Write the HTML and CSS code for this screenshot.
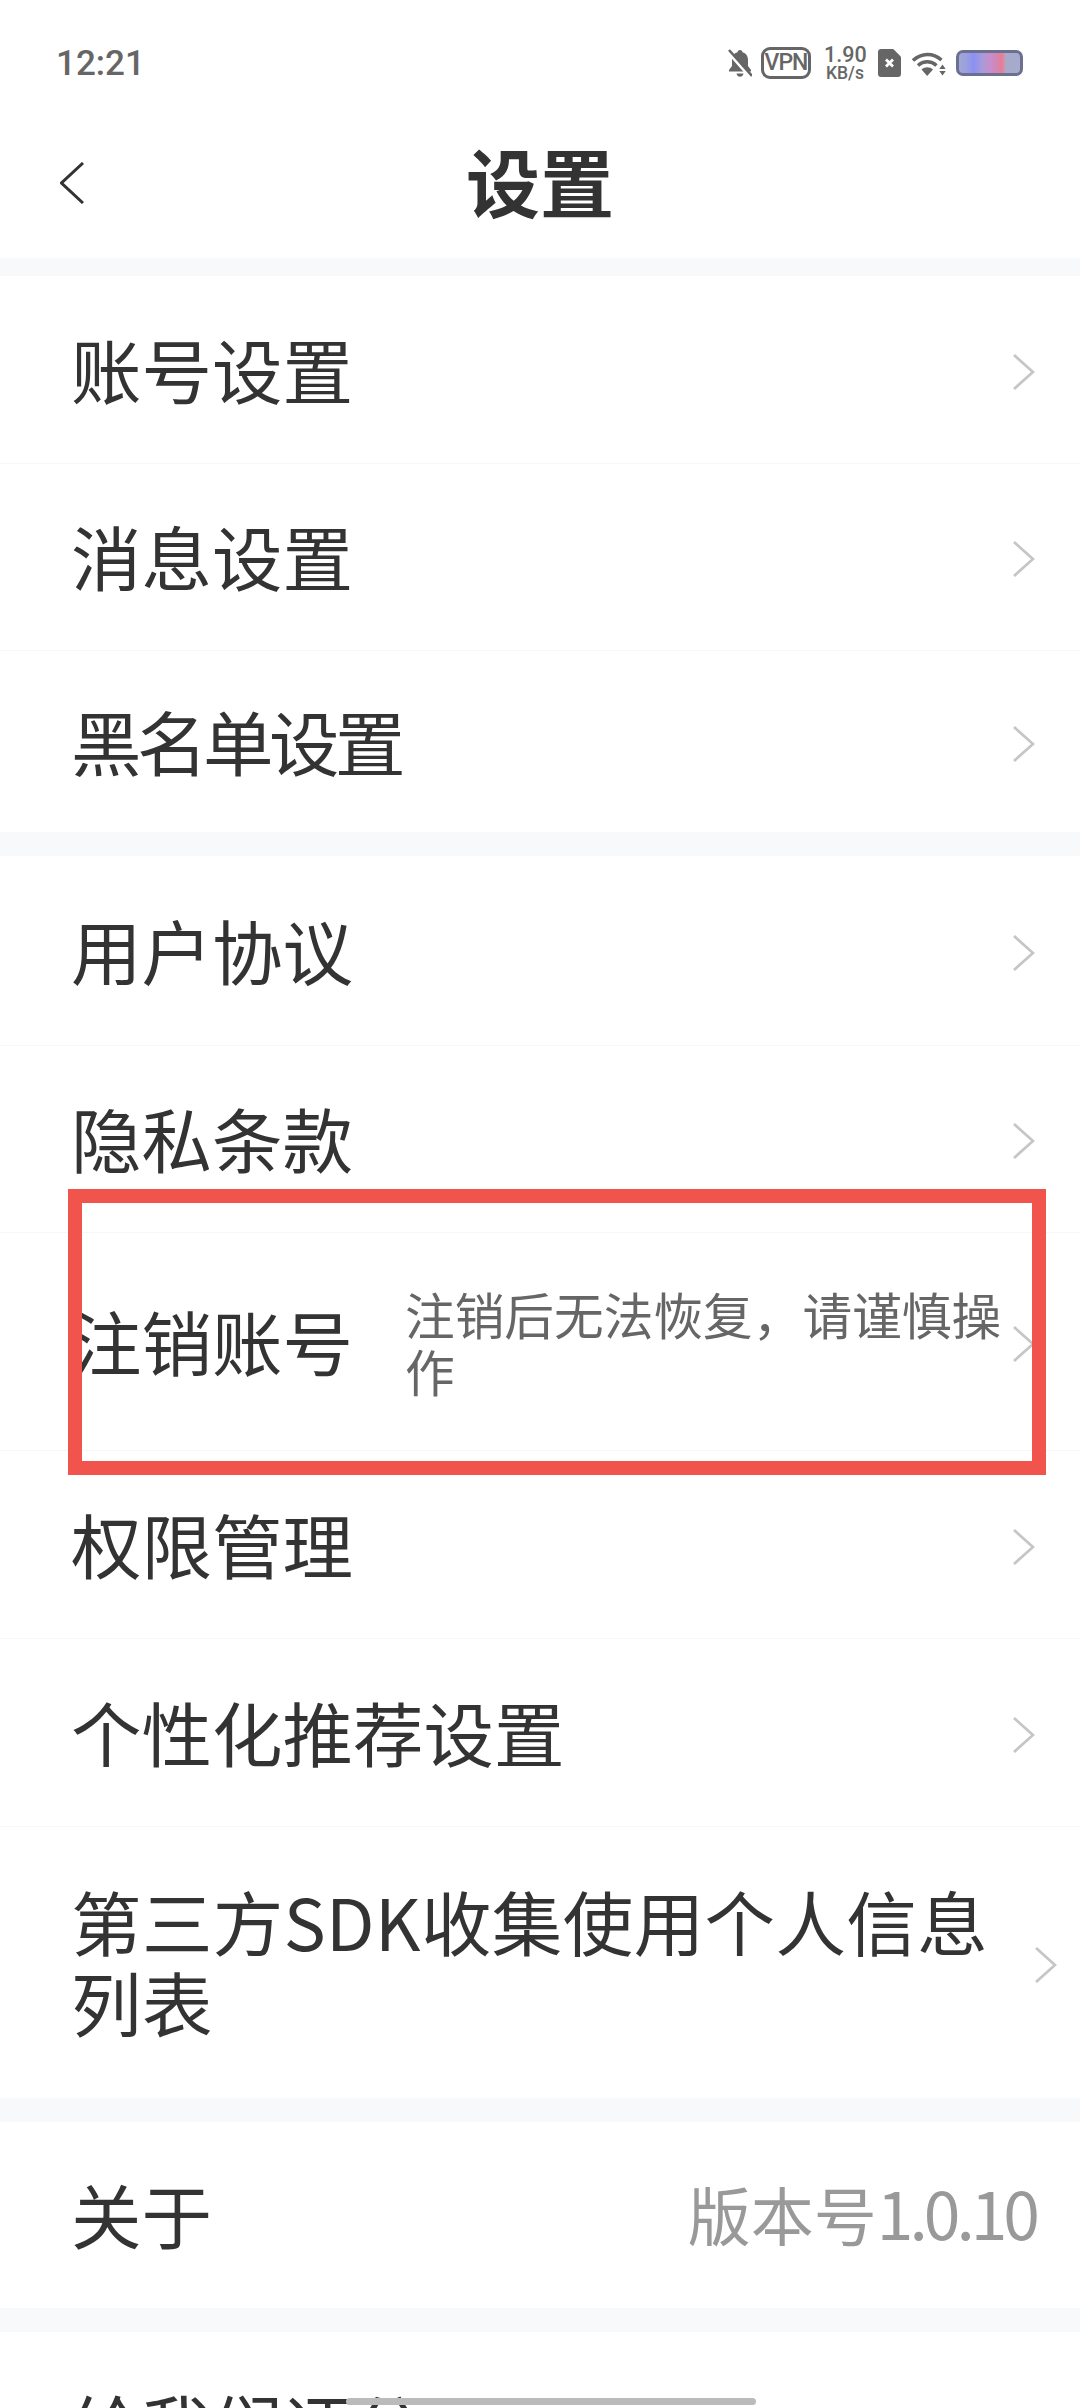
FILE: index.html
```html
<!DOCTYPE html>
<html>
<head>
<meta charset="utf-8">
<title>设置</title>
<link rel="stylesheet" href="styles.css">
</head>
<body>

<!-- Status bar -->
<div class="status">
  <div class="time">12:21</div>
  <div class="status-icons">
    <svg class="ic-bell" viewBox="0 0 24 28">
      <path d="M12 1c1.500 0 2.400 1 2.500 2.200 3.700 1 5.500 4 5.500 7.800v6l3 4v1.500H1V21l3-4v-6c0-3.800 1.800-6.800 5.500-7.800C9.600 2 10.500 1 12 1z" fill="#666"/>
      <path d="M8.500 24.500h7c-.3 2-1.700 3.300-3.500 3.300s-3.200-1.300-3.500-3.300z" fill="#666"/>
      <path d="M0 3L22 28" stroke="#fff" stroke-width="3"/>
      <path d="M1 1L24 27" stroke="#666" stroke-width="2.600"/>
    </svg>
    <div class="vpn">VPN</div>
    <div class="speed">
      <div class="speed-num">1.90</div>
      <div class="speed-unit">KB/s</div>
    </div>
    <svg class="ic-sim" viewBox="0 0 23 28">
      <path d="M3 0h11c1 0 1.600.3 2.300 1l5.700 5.700c.7.700 1 1.300 1 2.300v16c0 1.700-1.300 3-3 3H3c-1.700 0-3-1.300-3-3V3c0-1.700 1.300-3 3-3z" fill="#666"/>
      <path d="M8 10.500l7 7M15 10.500l-7 7" stroke="#fff" stroke-width="2.800"/>
    </svg>
    <svg class="ic-wifi" viewBox="0 0 34 26">
      <path d="M1 10.500C9.500 2.500 21 2.500 29.500 10" fill="none" stroke="#666" stroke-width="3.400"/>
      <path d="M6 15.500C11.500 10.500 19 10.500 24.500 15.500" fill="none" stroke="#666" stroke-width="3.400"/>
      <path d="M9.500 19.500C13 16.500 17.500 16.500 21 19.500L15.200 26z" fill="#666"/>
      <path d="M30.500 14.500l3.200 4.500h-6.400zM27.300 21h6.400l-3.200 4.500z" fill="#666"/>
    </svg>
    <div class="battery"></div>
  </div>
</div>

<!-- Title bar -->
<div class="nav">
  <svg class="back" viewBox="0 0 24 42">
    <path d="M23 1L1.500 21 23 41" fill="none" stroke="#333" stroke-width="3"/>
  </svg>
  <div class="nav-title">设置</div>
</div>

<div class="gap gap-first"></div>

<div class="row row-first">
  <div class="label">账号设置</div>
  <svg class="arrow" viewBox="0 0 22 36"><path d="M1 1l19 17L1 35" fill="none" stroke="#c6c6c6" stroke-width="2.800"/></svg>
</div>
<div class="row">
  <div class="label">消息设置</div>
  <svg class="arrow" viewBox="0 0 22 36"><path d="M1 1l19 17L1 35" fill="none" stroke="#c6c6c6" stroke-width="2.800"/></svg>
</div>
<div class="row row-last row-short">
  <div class="label label-tight">黑名单设置</div>
  <svg class="arrow" viewBox="0 0 22 36"><path d="M1 1l19 17L1 35" fill="none" stroke="#c6c6c6" stroke-width="2.800"/></svg>
</div>

<div class="gap"></div>

<div class="row row-tall">
  <div class="label">用户协议</div>
  <svg class="arrow" viewBox="0 0 22 36"><path d="M1 1l19 17L1 35" fill="none" stroke="#c6c6c6" stroke-width="2.800"/></svg>
</div>
<div class="row">
  <div class="label">隐私条款</div>
  <svg class="arrow" viewBox="0 0 22 36"><path d="M1 1l19 17L1 35" fill="none" stroke="#c6c6c6" stroke-width="2.800"/></svg>
</div>
<div class="row row-cancel">
  <div class="label">注销账号</div>
  <div class="sub">注销后无法恢复，请谨慎操作</div>
  <svg class="arrow" viewBox="0 0 22 36"><path d="M1 1l19 17L1 35" fill="none" stroke="#c6c6c6" stroke-width="2.800"/></svg>
  <!-- red box drawn on top of the row -->
  <div class="mark"></div>
</div>
<div class="row row-first">
  <div class="label">权限管理</div>
  <svg class="arrow" viewBox="0 0 22 36"><path d="M1 1l19 17L1 35" fill="none" stroke="#c6c6c6" stroke-width="2.800"/></svg>
</div>
<div class="row row-first">
  <div class="label">个性化推荐设置</div>
  <svg class="arrow" viewBox="0 0 22 36"><path d="M1 1l19 17L1 35" fill="none" stroke="#c6c6c6" stroke-width="2.800"/></svg>
</div>
<div class="row row-last row-sdk">
  <div class="label label-wrap">第三方SDK收集使用个人信息列表</div>
  <svg class="arrow" viewBox="0 0 22 36"><path d="M1 1l19 17L1 35" fill="none" stroke="#c6c6c6" stroke-width="2.800"/></svg>
</div>

<div class="gap"></div>

<div class="row row-last row-about">
  <div class="label">关于</div>
  <div class="version">版本号<span class="version-num">1.0.10</span></div>
</div>

<div class="gap"></div>

<div class="row row-last">
  <div class="label">给我们评分</div>
</div>

<div class="home-bar"></div>

</body>
</html>
```

FILE: styles.css
```css
body {
  margin: 0;
  width: 1080px;
  height: 2408px;
  overflow: hidden;
  position: relative;
  background-color: #fff;
  color: #333;
  font-family: "Noto Sans CJK SC", "Noto Sans", sans-serif;
}

/* Status bar */
.status {
  height: 126px;
  box-sizing: border-box;
  padding: 0 57px 0 56px;
  display: flex;
  justify-content: space-between;
  align-items: center;
}

.time {
  font-family: Roboto, sans-serif;
  font-size: 35px;
  font-weight: 500;
  color: #666;
}

.status-icons {
  display: flex;
  align-items: center;
}

.ic-bell {
  width: 24px;
  height: 28px;
}

.vpn {
  width: 50px;
  height: 32px;
  box-sizing: border-box;
  margin-left: 9px;
  border: 3px solid #666;
  border-radius: 9px;
  color: #666;
  font-family: Roboto, sans-serif;
  font-size: 23px;
  font-weight: 500;
  letter-spacing: -1px;
  line-height: 26px;
  text-align: center;
}

.speed {
  width: 42px;
  margin-left: 13px;
  color: #666;
  font-family: Roboto, sans-serif;
  font-weight: 500;
  text-align: center;
}

.speed-num {
  font-size: 21.5px;
  line-height: 21px;
}

.speed-unit {
  font-size: 17.5px;
  line-height: 17px;
}

.ic-sim {
  width: 23px;
  height: 28px;
  margin-left: 12px;
}

.ic-wifi {
  width: 34px;
  height: 26px;
  margin-left: 11px;
}

.battery {
  width: 67px;
  height: 26px;
  box-sizing: border-box;
  margin-left: 10px;
  border: 3px solid #6c7090;
  border-radius: 7px;
  background: linear-gradient(90deg, #a2a8d2 0%, #9a9fe0 12%, #8d90f2 24%, #a79bd8 38%, #c88ccc 52%, #e07f9c 70%, #e58a9c 74%, #a6aacb 76%, #a6aacb 100%);
}

/* Title bar */
.nav {
  height: 132px;
  box-sizing: border-box;
  padding: 0 0 18px 60px;
  display: flex;
  align-items: center;
  position: relative;
}

.back {
  width: 24px;
  height: 42px;
}

.nav-title {
  position: absolute;
  left: 0;
  right: 0;
  top: 15px;
  text-align: center;
  font-size: 74px;
  font-weight: 700;
  line-height: 78px;
}

/* List */
.gap {
  height: 24px;
  background-color: #f8f9fa;
}

.gap-first {
  height: 18px;
}

.row {
  height: 187px;
  box-sizing: border-box;
  padding: 0 45px 0 71px;
  display: flex;
  align-items: center;
  justify-content: space-between;
  border-bottom: 1px solid #f7f7f7;
  position: relative;
}

.row-first {
  height: 188px;
}

.row-short {
  height: 181px;
}

.row-tall {
  height: 190px;
}

.row-last {
  border-bottom: none;
}

.label {
  margin-bottom: 3px;
  font-size: 70.5px;
  line-height: 81px;
  white-space: nowrap;
}

.label-tight {
  letter-spacing: -4.5px;
}

.label-wrap {
  width: 950px;
  letter-spacing: 0.4px;
  white-space: normal;
}

.arrow {
  width: 22px;
  height: 36px;
  margin-top: 4px;
  flex-shrink: 0;
}

.row-cancel {
  height: 218px;
  justify-content: flex-start;
}

.sub {
  flex: 1;
  margin-left: 52px;
  font-size: 49.7px;
  line-height: 57px;
  color: #666;
}

.mark {
  position: absolute;
  left: 68px;
  top: -44px;
  width: 978px;
  height: 286px;
  box-sizing: border-box;
  border: 14px solid #f0544c;
}

.row-sdk {
  height: 271px;
  padding-right: 23px;
}

.row-about {
  height: 186px;
  padding-right: 44px;
}

.version {
  padding-bottom: 8px;
  font-size: 63px;
  color: #999;
}

.version-num {
  font-size: 66px;
  letter-spacing: -4px;
}

.home-bar {
  position: absolute;
  left: 346px;
  top: 2398px;
  width: 410px;
  height: 7px;
  border-radius: 4px;
  background-color: #bbb;
}
```
